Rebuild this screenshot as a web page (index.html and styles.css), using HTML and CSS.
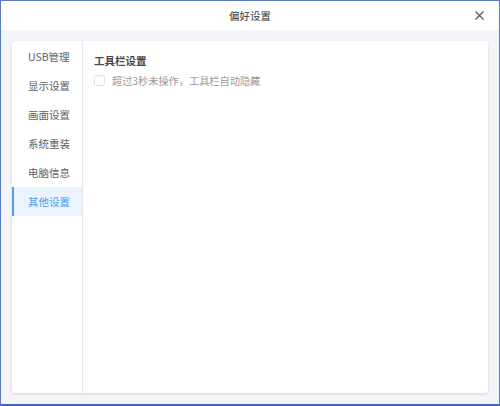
FILE: index.html
```html
<!DOCTYPE html>
<html lang="zh">
<head>
<meta charset="utf-8">
<link rel="stylesheet" href="styles.css">
</head>
<body>
<div class="window">
  <div class="header">
    <span class="title">偏好设置</span>
    <span class="close">
      <svg width="9" height="9" viewBox="0 0 9 9"><path d="M0.5 0.5 L8.5 8.5 M8.5 0.5 L0.5 8.5" stroke="#555" stroke-width="1.2" fill="none"/></svg>
    </span>
  </div>
  <div class="body">
    <div class="card">
      <ul class="sidebar">
        <li class="item">USB管理</li>
        <li class="item">显示设置</li>
        <li class="item">画面设置</li>
        <li class="item">系统重装</li>
        <li class="item">电脑信息</li>
        <li class="item active">其他设置</li>
      </ul>
      <div class="content">
        <div class="section-title">工具栏设置</div>
        <label class="option">
          <span class="checkbox"></span>
          <span class="option-text">超过3秒未操作，工具栏自动隐藏</span>
        </label>
      </div>
    </div>
  </div>
</div>
</body>
</html>
```
FILE: styles.css
```css
* { box-sizing: border-box; }
html, body { margin: 0; padding: 0; }
body {
  width: 500px;
  height: 406px;
  font-family: "Noto Sans CJK SC", "Liberation Sans", sans-serif;
  background: #ffffff;
}
.window {
  width: 500px;
  height: 406px;
  border: 1px solid #5a78c6;
  border-bottom: 2px solid #3f66c2;
  display: flex;
  flex-direction: column;
  background: #f3f5f9;
}
.header {
  height: 29px;
  background: #ffffff;
  display: flex;
  align-items: center;
  justify-content: center;
  position: relative;
  flex: none;
}
.title {
  font-size: 10.5px;
  color: #3a3a3a;
}
.close {
  position: absolute;
  right: 15px;
  top: 10px;
  width: 9px;
  height: 9px;
  display: flex;
}
.body {
  flex: 1;
  padding: 11px;
  display: flex;
}
.card {
  flex: 1;
  display: flex;
  background: #ffffff;
  border-radius: 3px;
  box-shadow: 0 1px 3px rgba(0, 0, 0, 0.12);
}
.sidebar {
  list-style: none;
  margin: 0;
  padding: 1px 0 0;
  width: 71px;
  border-right: 1px solid #e5e8ed;
  flex: none;
}
.item {
  height: 29px;
  line-height: 29px;
  padding-left: 14px;
  font-size: 10.5px;
  color: #606266;
  border-left: 2px solid transparent;
}
.item.active {
  background: #e9f4ff;
  border-left-color: #5a9ee8;
  color: #4c9cf0;
}
.content {
  flex: 1;
  padding: 12px 11px;
}
.section-title {
  font-size: 10.5px;
  font-weight: bold;
  color: #4a4a4a;
  line-height: 15px;
}
.option {
  display: flex;
  align-items: center;
  margin-top: 5px;
  height: 14px;
}
.checkbox {
  width: 11px;
  height: 11px;
  border: 1px solid #e1e3e8;
  border-radius: 2px;
  background: #ffffff;
  flex: none;
}
.option-text {
  margin-left: 7px;
  font-size: 10.2px;
  color: #9a9a9a;
}
```
